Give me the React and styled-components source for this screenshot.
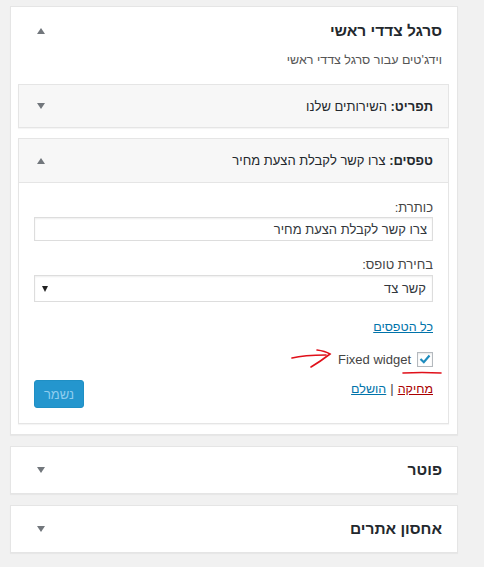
import styled, { createGlobalStyle } from "styled-components";

const GlobalStyle = createGlobalStyle`
  body {
    margin: 0;
    background: #f1f1f1;
    font-family: "Liberation Sans", Arial, "DejaVu Sans", sans-serif;
    color: #444;
  }
`;

const Toggle = ({ up }) => <Arrow $up={up} />;

const App = () => {
  return (
    <>
      <GlobalStyle />
      <Page>
        <Sidebar>
          <SidebarHead>
            <SidebarTitle>סרגל צדדי ראשי</SidebarTitle>
            <Toggle up />
          </SidebarHead>
          <Description>וידג'טים עבור סרגל צדדי ראשי</Description>

          <Widgets>
            <Widget>
              <WidgetTop>
                <WidgetTitle>
                  תפריט: <InTitle>השירותים שלנו</InTitle>
                </WidgetTitle>
                <Toggle />
              </WidgetTop>
            </Widget>

            <Widget>
              <WidgetTop $open>
                <WidgetTitle>
                  טפסים: <InTitle>צרו קשר לקבלת הצעת מחיר</InTitle>
                </WidgetTitle>
                <Toggle up />
              </WidgetTop>
              <WidgetInside>
                <Label>כותרת:</Label>
                <TextInput defaultValue="צרו קשר לקבלת הצעת מחיר" />

                <Label $spaced>בחירת טופס:</Label>
                <Select>
                  <span>קשר צד</span>
                  <SelectArrow />
                </Select>

                <AllForms href="#">כל הטפסים</AllForms>

                <CheckRow>
                  <CheckBox>
                    <svg width="12" height="10" viewBox="0 0 12 10">
                      <path d="M1.5 5 L4.8 8.2 L10.5 1.5" fill="none" stroke="#1e8cbe" strokeWidth="2.2" />
                    </svg>
                  </CheckBox>
                  <CheckLabel>Fixed widget</CheckLabel>
                  <svg width="42" height="22" viewBox="0 0 42 22">
                    <path d="M2 10 Q14 7 36 7" fill="none" stroke="#e0101a" strokeWidth="1.6" strokeLinecap="round" />
                    <path d="M27 2 Q35 3 40 6 Q31 13 21 19" fill="none" stroke="#e0101a" strokeWidth="1.6" strokeLinecap="round" />
                  </svg>
                  <Underline width="40" height="6" viewBox="0 0 40 6">
                    <path d="M1 3 Q20 2 39 3" fill="none" stroke="#e0101a" strokeWidth="1.6" strokeLinecap="round" />
                  </Underline>
                </CheckRow>

                <Actions>
                  <ActionLinks>
                    <Link href="#" $danger>מחיקה</Link>
                    <Sep>|</Sep>
                    <Link href="#">הושלם</Link>
                  </ActionLinks>
                  <SaveButton disabled>נשמר</SaveButton>
                </Actions>
              </WidgetInside>
            </Widget>
          </Widgets>
        </Sidebar>

        <Sidebar>
          <ClosedHead>
            <SidebarTitle>פוטר</SidebarTitle>
            <Toggle />
          </ClosedHead>
        </Sidebar>

        <Sidebar>
          <ClosedHead>
            <SidebarTitle>אחסון אתרים</SidebarTitle>
            <Toggle />
          </ClosedHead>
        </Sidebar>
      </Page>
    </>
  );
};

export default App;

const Page = styled.div`
  direction: rtl;
  padding: 6px 26px 12px 10px;
  display: flex;
  flex-direction: column;
  gap: 11px;
`;

const Sidebar = styled.div`
  background: #fff;
  border: 1px solid #e5e5e5;
  box-shadow: 0 1px 1px rgba(0, 0, 0, 0.04);
`;

const SidebarHead = styled.div`
  display: flex;
  align-items: center;
  justify-content: space-between;
  padding: 12px 15px 0 26px;
  height: 24px;
`;

const ClosedHead = styled(SidebarHead)`
  padding-top: 0;
  height: 46px;
`;

const SidebarTitle = styled.h2`
  margin: 0;
  font-size: 15.5px;
  line-height: 24px;
  font-weight: 700;
  color: #23282d;
`;

const Arrow = styled.span`
  width: 0;
  height: 0;
  border-left: 4px solid transparent;
  border-right: 4px solid transparent;
  ${({ $up }) =>
    $up ? "border-bottom: 6px solid #72777c;" : "border-top: 6px solid #72777c;"}
`;

const Description = styled.p`
  margin: 8px 0 15px;
  padding: 0 15px;
  font-size: 12.5px;
  line-height: 18px;
  color: #555;
`;

const Widgets = styled.div`
  display: flex;
  flex-direction: column;
  gap: 10px;
  padding: 0 8px 10px 7px;
`;

const Widget = styled.div`
  background: #fff;
  border: 1px solid #e5e5e5;
  box-shadow: 0 1px 1px rgba(0, 0, 0, 0.04);
`;

const WidgetTop = styled.div`
  display: flex;
  align-items: center;
  justify-content: space-between;
  height: ${({ $open }) => ($open ? "43px" : "42px")};
  padding: 0 15px 0 18px;
  background: #f7f7f7;
  ${({ $open }) => $open && "border-bottom: 1px solid #e5e5e5;"}
`;

const WidgetTitle = styled.h3`
  margin: 0;
  font-size: 13px;
  font-weight: 700;
  color: #23282d;
`;

const InTitle = styled.span`
  font-weight: 400;
  color: #23282d;
`;

const WidgetInside = styled.div`
  display: flex;
  flex-direction: column;
  align-items: stretch;
  padding: 16px 15px 15px;
`;

const Label = styled.label`
  font-size: 13px;
  line-height: 18px;
  color: #444;
  margin-top: ${({ $spaced }) => ($spaced ? "15px" : "0")};
`;

const TextInput = styled.input`
  box-sizing: border-box;
  height: 24px;
  margin: 0;
  padding: 0 5px;
  border: 1px solid #ddd;
  box-shadow: inset 0 1px 2px rgba(0, 0, 0, 0.07);
  font-family: inherit;
  font-size: 13px;
  color: #32373c;
  direction: rtl;
  outline: none;
`;

const Select = styled.div`
  box-sizing: border-box;
  height: 27px;
  margin-top: 1px;
  padding: 0 6px 0 7px;
  display: flex;
  align-items: center;
  justify-content: space-between;
  border: 1px solid #ddd;
  box-shadow: inset 0 1px 2px rgba(0, 0, 0, 0.07);
  font-size: 13px;
  color: #32373c;
`;

const SelectArrow = styled.span`
  width: 0;
  height: 0;
  border-left: 3.5px solid transparent;
  border-right: 3.5px solid transparent;
  border-top: 6px solid #222;
`;

const Link = styled.a`
  font-size: 12.5px;
  line-height: 18px;
  color: ${({ $danger }) => ($danger ? "#a00" : "#0073aa")};
  text-decoration: underline;
`;

const AllForms = styled(Link)`
  align-self: flex-start;
  margin-top: 16px;
`;

const CheckRow = styled.div`
  position: relative;
  display: flex;
  align-items: center;
  gap: 6px;
  margin-top: 14px;
  height: 18px;
`;

const CheckBox = styled.span`
  box-sizing: border-box;
  width: 16px;
  height: 15px;
  display: flex;
  align-items: center;
  justify-content: center;
  border: 1px solid #b4b9be;
  background: #fff;
  box-shadow: inset 0 1px 2px rgba(0, 0, 0, 0.1);
`;

const CheckLabel = styled.span`
  font-size: 13px;
  color: #444;
`;

const Underline = styled.svg`
  position: absolute;
  right: -9px;
  top: 20px;
`;

const Actions = styled.div`
  display: flex;
  justify-content: space-between;
  align-items: flex-start;
  margin-top: 12px;
`;

const ActionLinks = styled.div`
  display: flex;
  align-items: center;
  gap: 4px;
  font-size: 13px;
  line-height: 18px;
`;

const Sep = styled.span`
  color: #444;
`;

const SaveButton = styled.button`
  box-sizing: border-box;
  width: 50px;
  height: 28px;
  padding: 0;
  border: 1px solid #1f8fc4;
  border-radius: 3px;
  background: #2496ce;
  color: #8fcdee;
  font-family: inherit;
  font-size: 13px;
`;
